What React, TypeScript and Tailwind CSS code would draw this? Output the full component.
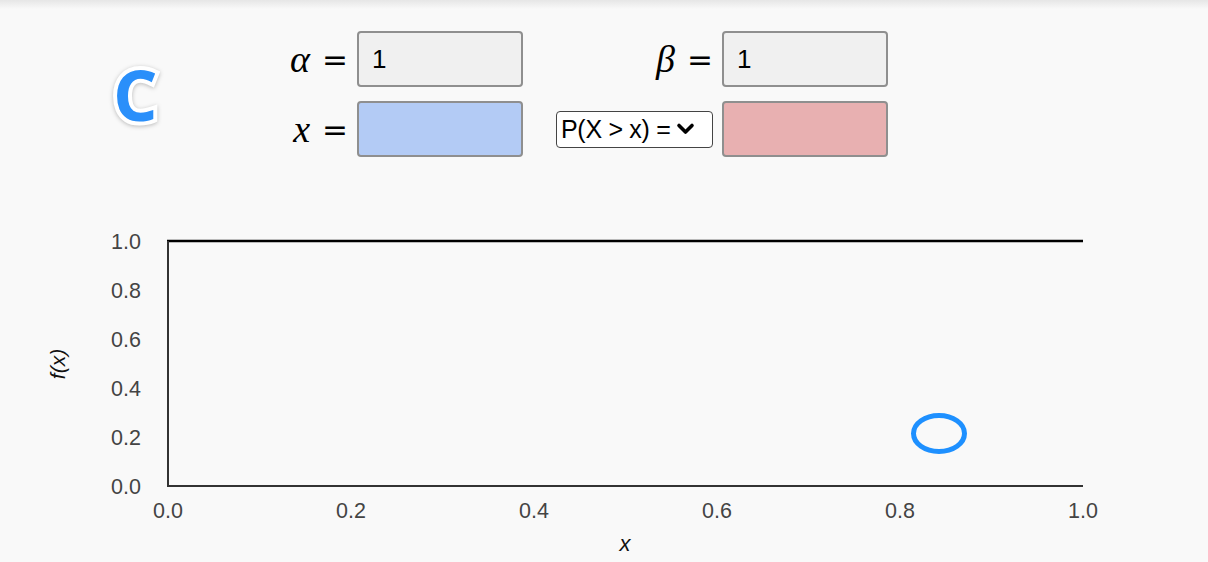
import React from "react";

const xTicks = [0, 0.2, 0.4, 0.6, 0.8, 1.0];
const X0 = 168;
const X1 = 1083;
const Y0 = 486;
const Y1 = 241;

function MathLabel({ sym }: { sym: string }) {
  return (
    <div className="flex items-center justify-end gap-[12px] pr-[9px] text-black">
      <span className="text-[38px] italic leading-none [font-family:'Liberation_Serif',serif]">{sym}</span>
      <span className="text-[31px] leading-none [font-family:'DejaVu_Sans',sans-serif]">=</span>
    </div>
  );
}

function Field({ value, color }: { value?: string; color: string }) {
  return (
    <input
      readOnly
      value={value ?? ""}
      className={`w-[166px] h-[56px] border-2 border-[#8f8f8f] rounded-[4px] pl-[13px] text-[26px] text-black outline-none [font-family:'Liberation_Sans',Arial,sans-serif] ${color}`}
    />
  );
}

export default function App() {
  return (
    <div className="w-[1208px] h-[562px] overflow-hidden bg-[linear-gradient(to_bottom,#e6e6e6_0px,#f9f9f9_9px)] [font-family:'Liberation_Sans',Arial,sans-serif]">
      <div className="flex items-center h-[170px] pb-[13px] pt-[31px]">
        <div className="w-[270px] pl-[113px] flex items-center">
          <span className="text-[70px] font-bold leading-none text-[#2a8ffa] [font-family:'Open_Sans',sans-serif] [-webkit-text-stroke:8px_white] [paint-order:stroke_fill] [filter:drop-shadow(0_1px_2px_rgba(0,0,0,0.25))]">
            C
          </span>
        </div>
        <div className="grid grid-cols-[87px_166px_199px_166px] grid-rows-[56px_56px] gap-y-[14px] items-center">
          <MathLabel sym="α" />
          <Field value="1" color="bg-[#f0f0f0]" />
          <MathLabel sym="β" />
          <Field value="1" color="bg-[#f0f0f0]" />

          <MathLabel sym="x" />
          <Field color="bg-[#b3cbf5]" />
          <div className="flex justify-end pr-[9px]">
            <div className="w-[157px] h-[37px] border-[1.5px] border-[#444] rounded-[4px] bg-white flex items-center pl-[4px] text-[25px] text-black whitespace-nowrap">
              <span className="leading-none tracking-[-0.3px]">P(X &gt; x) =</span>
              <svg width="19" height="14" viewBox="0 0 19 14" className="ml-[5px]">
                <path d="M3 3.5 L9.5 10 L16 3.5" fill="none" stroke="#000" strokeWidth="3.6" strokeLinecap="round" strokeLinejoin="round" />
              </svg>
            </div>
          </div>
          <Field color="bg-[#e8b0b1]" />
        </div>
      </div>
      <svg width="1208" height="392" viewBox="0 170 1208 392" className="block">
        <line x1={X0 - 1} y1={Y1} x2={X1} y2={Y1} stroke="#000" strokeWidth="2.5" />
        <line x1={X0} y1={Y1} x2={X0} y2={Y0} stroke="#333" strokeWidth="2" />
        <line x1={X0 - 1} y1={Y0} x2={X1} y2={Y0} stroke="#333" strokeWidth="2" />
        {xTicks.map((t) => (
          <text
            key={"x" + t}
            x={X0 + t * (X1 - X0)}
            y={518}
            textAnchor="middle"
            fontSize="21.5"
            fill="#444"
            fontFamily="'Liberation Sans', Arial, sans-serif"
          >
            {t.toFixed(1)}
          </text>
        ))}
        {xTicks.map((t) => (
          <text
            key={"y" + t}
            x={141}
            y={Y0 - t * (Y0 - Y1) + 8}
            textAnchor="end"
            fontSize="21.5"
            fill="#444"
            fontFamily="'Liberation Sans', Arial, sans-serif"
          >
            {t.toFixed(1)}
          </text>
        ))}
        <text
          x={625}
          y={551}
          textAnchor="middle"
          fontSize="22"
          fontStyle="italic"
          fill="#111"
          fontFamily="'Liberation Sans', Arial, sans-serif"
        >
          x
        </text>
        <text
          x={0}
          y={0}
          transform="translate(65 364) rotate(-90)"
          textAnchor="middle"
          fontSize="21"
          fontStyle="italic"
          fill="#111"
          fontFamily="'Liberation Sans', Arial, sans-serif"
        >
          f(x)
        </text>
        <ellipse cx={939} cy={433.5} rx={25.5} ry={18} fill="none" stroke="#1e90ff" strokeWidth="5" />
      </svg>
    </div>
  );
}
